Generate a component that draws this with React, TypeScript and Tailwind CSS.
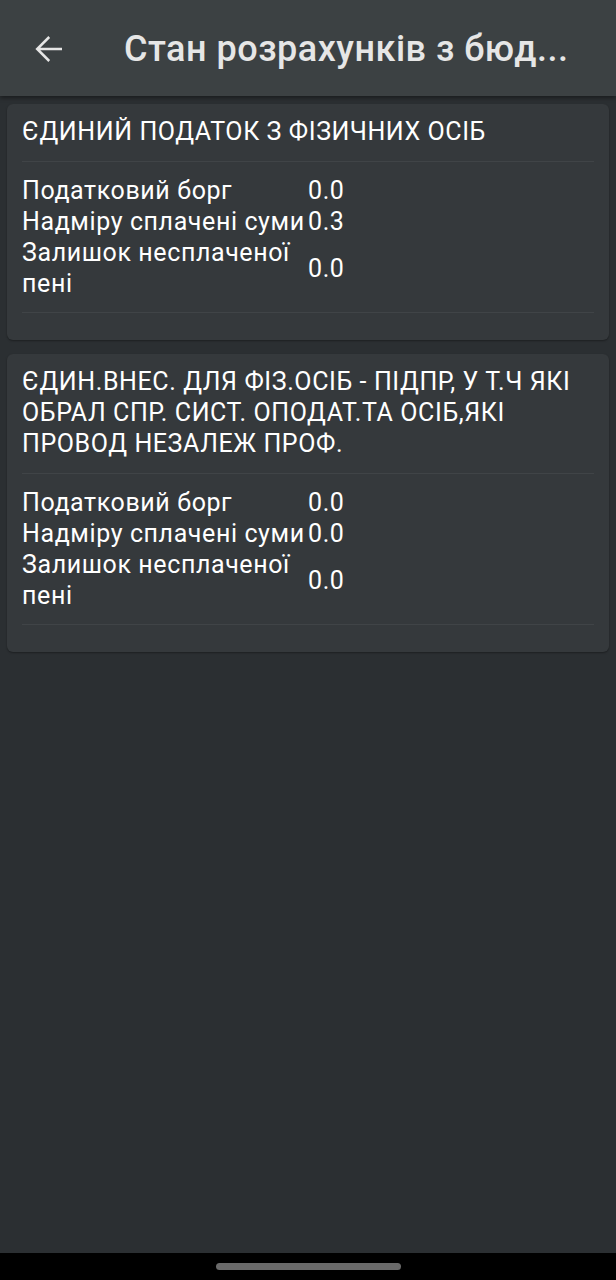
import React from 'react'

interface Row {
  label: string
  value: string
}

interface Payment {
  title: string
  rows: Row[]
}

const payments: Payment[] = [
  {
    title: 'ЄДИНИЙ ПОДАТОК З ФІЗИЧНИХ ОСІБ',
    rows: [
      { label: 'Податковий борг', value: '0.0' },
      { label: 'Надміру сплачені суми', value: '0.3' },
      { label: 'Залишок несплаченої пені', value: '0.0' },
    ],
  },
  {
    title: 'ЄДИН.ВНЕС. ДЛЯ ФІЗ.ОСІБ - ПІДПР, У Т.Ч ЯКІ ОБРАЛ СПР. СИСТ. ОПОДАТ.ТА ОСІБ,ЯКІ ПРОВОД НЕЗАЛЕЖ ПРОФ.',
    rows: [
      { label: 'Податковий борг', value: '0.0' },
      { label: 'Надміру сплачені суми', value: '0.0' },
      { label: 'Залишок несплаченої пені', value: '0.0' },
    ],
  },
]

function BackArrow() {
  return (
    <svg width="42" height="42" viewBox="0 0 24 24" fill="#e6e6e6">
      <path d="M20 11.25H7.6l5.6-5.6L12.2 4.6l-7.4 7.4 7.4 7.4 1-1.05-5.6-5.6H20v-1.5z" />
    </svg>
  )
}

function PaymentCard({ payment }: { payment: Payment }) {
  return (
    <div className="bg-[#35393c] rounded-[6px] px-[15px] pt-[12px] pb-[27px] shadow-[0_1px_2px_rgba(0,0,0,0.35)]">
      <div className="text-[25px] leading-[31px] tracking-[0.6px] text-white">{payment.title}</div>
      <div className="h-px bg-[#404447] mt-[14px]" />
      <div className="flex flex-col py-[13px]">
        {payment.rows.map(r => (
          <div key={r.label} className="flex items-center text-[25px] leading-[31px] tracking-[0.6px] text-white">
            <span className="w-[286px] shrink-0">{r.label}</span>
            <span>{r.value}</span>
          </div>
        ))}
      </div>
      <div className="h-px bg-[#404447]" />
    </div>
  )
}

export default function App() {
  return (
    <div
      className="flex flex-col h-[1280px] w-[616px] bg-[#2b2f32] overflow-hidden"
      style={{ fontFamily: 'Roboto, "Noto Sans", sans-serif' }}
    >
      {/* Toolbar */}
      <header className="relative z-10 flex items-center h-[96px] bg-[#3c4143] shadow-[0_2px_4px_rgba(0,0,0,0.4)] shrink-0">
        <div className="ml-[27px] mt-[2px] flex items-center">
          <BackArrow />
        </div>
        <h1 className="ml-[55px] text-[36px] font-medium tracking-[0.5px] text-[#e6e6e6] whitespace-nowrap mt-[1px]">
          Стан розрахунків з бюд...
        </h1>
      </header>

      <main className="flex-1 flex flex-col gap-[14px] px-[7px] pt-[8px]">
        {payments.map(p => (
          <PaymentCard key={p.title} payment={p} />
        ))}
      </main>

      {/* System navigation bar */}
      <div className="h-[27px] bg-black flex items-center justify-center shrink-0">
        <div className="w-[185px] h-[7px] rounded-full bg-[#6a6a6a]" />
      </div>
    </div>
  )
}
